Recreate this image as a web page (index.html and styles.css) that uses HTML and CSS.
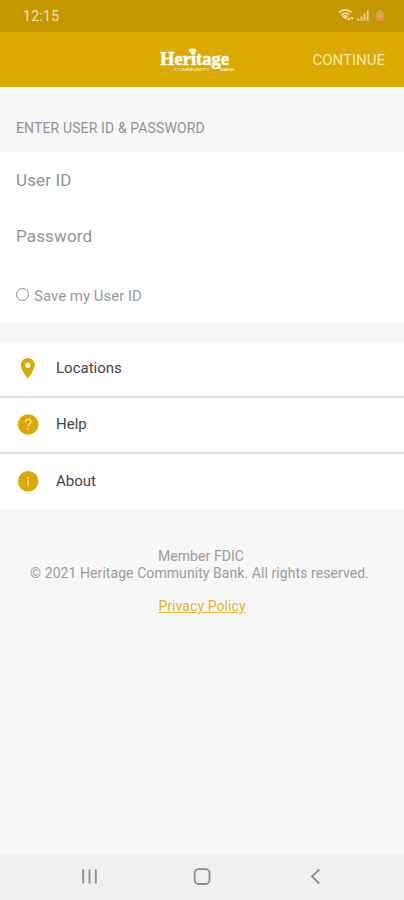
FILE: index.html
```html
<!DOCTYPE html>
<html lang="en">
<head>
  <meta charset="UTF-8" />
  <meta name="viewport" content="width=device-width, initial-scale=1.0"/>
  <title>Heritage Community Bank</title>
  <link rel="stylesheet" href="styles.css">
</head>
<body>

  <div class="status-bar">
    <span class="time">12:15</span>
    <svg class="status-icons" width="50" height="16" viewBox="0 0 50 16">
      <!-- wifi -->
      <path d="M1 4.500C4.500 1 10 1 13.500 4.500M3.500 7C6 4.800 9 4.800 11 7" fill="none" stroke="#f0dfa4" stroke-width="1.800"/>
      <path d="M4 8.300Q7.200 5.500 10 8.300L7.600 11.500z" fill="#f0dfa4"/>
      <path d="M9 12l1.800-3.300 1.500 3.300zM12.300 9.300h3.400L14 12.500z" fill="#f0dfa4"/>
      <!-- signal -->
      <path d="M19.500 10.500h1.900V13h-1.900zM22.500 8.500h1.900V13h-1.900zM25.500 5.500h1.900V13h-1.900zM28.700 2.500h1.900V13h-1.900z" fill="#e8d38c"/>
      <!-- battery -->
      <path d="M38.500 3.500h2V2h3v1.500h2V10h-7z" fill="#d3aa55"/>
      <path d="M38.500 10h7v3h-7z" fill="#ed8a4c"/>
    </svg>
  </div>

  <header class="header">
    <svg class="logo" width="80" height="28" viewBox="0 0 80 28">
      <g fill="#fff">
        <text class="logo-name" x="2" y="19.300" textLength="69" lengthAdjust="spacingAndGlyphs">Heritage</text>
        <text class="logo-sub" x="16" y="24.500" textLength="36" lengthAdjust="spacingAndGlyphs">COMMUNITY</text>
        <text class="logo-sub" x="62" y="24.500" textLength="15" lengthAdjust="spacingAndGlyphs">BANK</text>
        <ellipse cx="34.500" cy="4.600" rx="3.800" ry="2"/>
        <path d="M32 5h5l-1.500 3h-2z"/>
      </g>
      <path d="M32.500 4.800h1M35.500 4.800h1" stroke="#dba900" stroke-width="0.800"/>
    </svg>
    <button class="continue">CONTINUE</button>
  </header>

  <h2 class="section-title">ENTER USER ID &amp; PASSWORD</h2>

  <form class="login-form">
    <input type="text" class="field user" placeholder="User ID" />
    <input type="password" class="field password" placeholder="Password" />
    <label class="save">
      <input type="checkbox" />
      <span>Save my User ID</span>
    </label>
  </form>

  <ul class="menu">
    <li>
      <svg width="22" height="22" viewBox="0 0 22 22">
        <path d="M10.800 1A7 7 0 0 0 3.800 8C3.800 13 10.800 21.500 10.800 21.500S17.800 13 17.800 8A7 7 0 0 0 10.800 1zm0 4.600a2.600 2.600 0 1 1 0 5.200 2.600 2.600 0 0 1 0-5.200z" fill="#dba900"/>
      </svg>
      <span>Locations</span>
    </li>
    <li>
      <svg width="22" height="22" viewBox="0 0 22 22">
        <circle cx="11.200" cy="11.500" r="10.300" fill="#dba900"/>
        <path d="M8.500 9.300c0-3.900 5.600-3.700 5.400-.4-.2 2-2.700 2.300-2.700 4.700M11.200 15.200v1.700" fill="none" stroke="#f7e5ae" stroke-width="1.300"/>
      </svg>
      <span>Help</span>
    </li>
    <li>
      <svg width="22" height="22" viewBox="0 0 22 22">
        <circle cx="11.200" cy="11.300" r="10.300" fill="#dba900"/>
        <path d="M11.200 7.300v1.600M11.200 10.300v5.200" stroke="#f7e5ae" stroke-width="1.500"/>
      </svg>
      <span>About</span>
    </li>
  </ul>

  <footer class="footer">
    <p class="member">Member FDIC</p>
    <p class="copyright">© 2021 Heritage Community Bank. All rights reserved.</p>
    <a href="#">Privacy Policy</a>
  </footer>

  <nav class="nav-bar">
    <svg width="18" height="18" viewBox="0 0 18 18">
      <path d="M3.200 1.500v14M9.500 1.500v14M15.800 1.500v14" stroke="#929292" stroke-width="2"/>
    </svg>
    <svg width="18" height="18" viewBox="0 0 18 18">
      <rect x="1.700" y="1.200" width="14.800" height="14.800" rx="4" fill="none" stroke="#8c8c8c" stroke-width="1.800"/>
    </svg>
    <svg width="18" height="18" viewBox="0 0 18 18">
      <path d="M13.300 1.500L6 8.500l7.300 7" fill="none" stroke="#8c8c8c" stroke-width="1.800"/>
    </svg>
  </nav>

</body>
</html>
```
FILE: styles.css
```css
* {
  box-sizing: border-box;
}

body {
  margin: 0;
  height: 100vh;
  display: flex;
  flex-direction: column;
  font-family: Roboto, sans-serif;
  background: #f7f7f7;
  color: #444;
}

.status-bar {
  height: 32px;
  padding: 0 16px 0 23px;
  display: flex;
  justify-content: space-between;
  align-items: center;
  background: #c49700;
}

.time {
  font-size: 14px;
  letter-spacing: 0.3px;
  color: #f3e5b5;
}

.header {
  height: 55px;
  padding: 0 19px 0 158px;
  display: flex;
  justify-content: space-between;
  align-items: center;
  background: #dba900;
}

.logo-name {
  font-family: "Liberation Serif", serif;
  font-size: 19px;
  font-weight: bold;
  stroke: #fff;
  stroke-width: 0.5px;
}

.logo-sub {
  font-family: "Liberation Sans", sans-serif;
  font-size: 4px;
}

.continue {
  padding: 0;
  border: none;
  background: none;
  font-family: inherit;
  font-size: 15px;
  color: #f8e8b4;
}

.section-title {
  height: 65px;
  margin: 0;
  padding: 33px 16px 0;
  font-size: 14px;
  line-height: 16px;
  letter-spacing: 0.13px;
  font-weight: normal;
  color: #929292;
}

.login-form {
  height: 171px;
  display: flex;
  flex-direction: column;
  background: #fff;
}

.field {
  height: 56px;
  padding: 0 16px;
  border: none;
  outline: none;
  background: none;
  font-family: inherit;
  font-size: 17px;
  letter-spacing: 0.15px;
}

.field::placeholder {
  color: #949494;
}

.save {
  height: 59px;
  padding: 4px 16px 0;
  display: flex;
  align-items: center;
  gap: 5px;
  font-size: 15px;
  color: #9a9a9a;
}

.save input {
  appearance: none;
  width: 13px;
  height: 13px;
  margin: 0 0 2px;
  border: 1.5px solid #8a8a8a;
  border-radius: 50%;
}

.menu {
  margin: 19px 0 0;
  padding: 0;
  list-style-type: none;
  background: #fff;
}

.menu li {
  height: 56px;
  padding: 0 17px 2px;
  display: flex;
  align-items: center;
  gap: 17px;
  font-size: 15px;
  border-bottom: 2px solid #e2e2e2;
}

.menu li:last-child {
  height: 55px;
  border-bottom: none;
}

.footer {
  flex: 1;
  padding-top: 39px;
  text-align: center;
  font-size: 14px;
  line-height: 17px;
  letter-spacing: 0.07px;
  color: #9b9b9b;
}

.footer p {
  margin: 0;
}

.footer .member {
  margin-right: 2px;
}

.footer .copyright {
  margin: 0 5px 16px 0;
}

.footer a {
  color: #dfb531;
}

.nav-bar {
  height: 46px;
  padding: 0 80px;
  display: flex;
  justify-content: space-between;
  align-items: center;
  background: #f0f0f0;
}
```
